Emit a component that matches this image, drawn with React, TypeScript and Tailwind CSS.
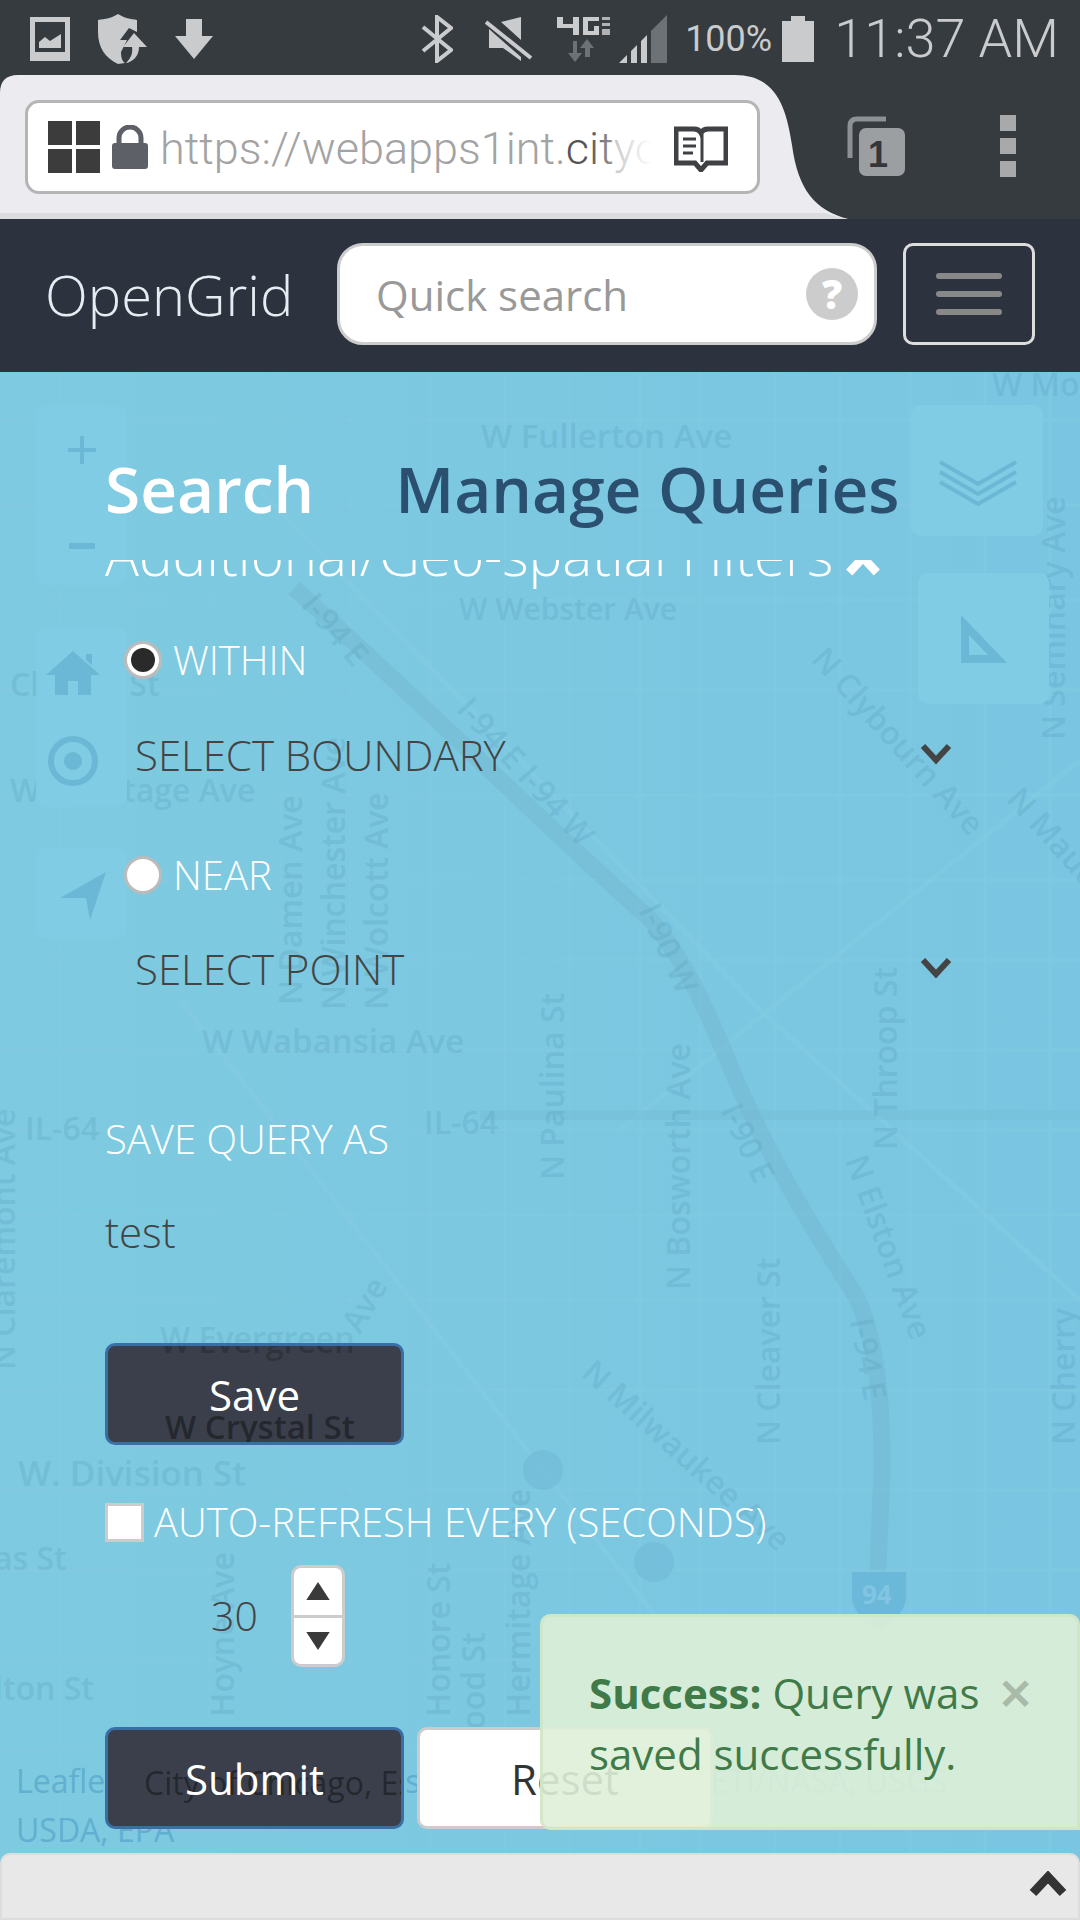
import React from 'react';

const sans = { fontFamily: '"Open Sans", sans-serif' };

// map labels, in page coordinates
const labels: { x: number; y: number; t: string; r?: number; s?: number }[] = [
  { x: 481, y: 448, t: 'W Fullerton Ave', s: 33 },
  { x: 459, y: 620, t: 'W Webster Ave', s: 30 },
  { x: 992, y: 396, t: 'W Mo' },
  { x: 10, y: 696, t: 'Clinton St' },
  { x: 10, y: 802, t: 'W Armitage Ave' },
  { x: 202, y: 1053, t: 'W Wabansia Ave', s: 33 },
  { x: 25, y: 1140, t: 'IL-64' },
  { x: 424, y: 1134, t: 'IL-64' },
  { x: 160, y: 1350, t: 'W Evergreen' },
  { x: 18, y: 1486, t: 'W. Division St', s: 35 },
  { x: -6, y: 1570, t: 'as St' },
  { x: -6, y: 1700, t: 'lton St' },
  { x: 302, y: 1005, t: 'N Damen Ave', r: -90 },
  { x: 345, y: 1010, t: 'N Winchester Ave', r: -90 },
  { x: 388, y: 1010, t: 'N Wolcott Ave', r: -90 },
  { x: 564, y: 1180, t: 'N Paulina St', r: -90 },
  { x: 690, y: 1290, t: 'N Bosworth Ave', r: -90 },
  { x: 897, y: 1150, t: 'N Throop St', r: -90 },
  { x: 780, y: 1445, t: 'N Cleaver St', r: -90 },
  { x: 1075, y: 1445, t: 'N Cherry', r: -90 },
  { x: 15, y: 1370, t: 'N Claremont Ave', r: -90 },
  { x: 234, y: 1750, t: 'N Hoyne Ave', r: -90 },
  { x: 450, y: 1750, t: 'N Honore St', r: -90 },
  { x: 485, y: 1760, t: 'Wood St', r: -90 },
  { x: 530, y: 1750, t: 'N Hermitage Ave', r: -90 },
  { x: 1065, y: 740, t: 'N Seminary Ave', r: -90 },
  { x: 810, y: 660, t: 'N Clybourn Ave', r: 48 },
  { x: 1005, y: 800, t: 'N Maud', r: 48 },
  { x: 845, y: 1160, t: 'N Elston Ave', r: 70 },
  { x: 580, y: 1375, t: 'N Milwaukee Ave', r: 42 },
  { x: 360, y: 1335, t: 'Ave', r: -60 },
  { x: 300, y: 605, t: 'I-94 E', r: 50 },
  { x: 455, y: 710, t: 'I-94 E  I-94 W', r: 48 },
  { x: 638, y: 910, t: 'I-90 W', r: 65 },
  { x: 720, y: 1110, t: 'I-90 E', r: 65 },
  { x: 850, y: 1320, t: 'I-94 E', r: 80 },
];

const vLines = [60, 130, 210, 280, 350, 430, 505, 570, 640, 700, 775, 840, 910, 985, 1050];
const hLines = [420, 505, 600, 690, 795, 880, 960, 1050, 1130, 1215, 1300, 1390, 1490, 1570, 1660, 1750];

function MapLayer() {
  return (
    <svg viewBox="0 372 1080 1548" className="absolute inset-0 w-full h-full" style={sans}>
      {vLines.map((x) => (
        <line key={x} x1={x} y1={372} x2={x} y2={1920} stroke="#88cde3" strokeWidth="3" opacity="0.3" />
      ))}
      {hLines.map((y) => (
        <line key={y} x1={0} y1={y} x2={1080} y2={y} stroke="#88cde3" strokeWidth="3" opacity="0.3" />
      ))}
      <path d="M250 480 L760 1010 L1080 1300" stroke="#88cde3" strokeWidth="5" fill="none" opacity="0.4" />
      <path d="M620 1130 L1080 760" stroke="#88cde3" strokeWidth="5" fill="none" opacity="0.35" />
      <path d="M180 1000 L720 1700" stroke="#88cde3" strokeWidth="5" fill="none" opacity="0.4" />
      <path d="M480 1115 H1080" stroke="#74b9d2" strokeWidth="10" fill="none" opacity="0.35" />
      <path
        d="M294 588 C420 700 560 840 649 918 C690 965 715 1030 735 1078 C775 1170 820 1240 857 1298 C880 1350 882 1420 882 1469 L878 1570"
        stroke="#74b5ce"
        strokeWidth="17"
        fill="none"
        opacity="0.45"
      />
      <circle cx="543" cy="1470" r="20" fill="#6cb4d4" opacity="0.45" />
      <circle cx="654" cy="1562" r="20" fill="#6cb4d4" opacity="0.45" />
      <path d="M852 1572 H906 V1600 Q900 1622 879 1630 Q858 1622 852 1600 Z" fill="#5fadd4" opacity="0.55" />
      <text x="862" y="1604" fontSize="26" fontWeight="700" fill="#8ccbe6" opacity="0.7">94</text>
      {labels.map((l) => (
        <text
          key={l.t + l.x}
          x={l.x}
          y={l.y}
          fontSize={l.s ?? 32}
          fontWeight="600"
          fill="#4c8fb0"
          opacity="0.2"
          transform={l.r ? `rotate(${l.r} ${l.x} ${l.y})` : undefined}
        >
          {l.t}
        </text>
      ))}
      <text x="16" y="1793" fontSize="32" fill="#4e9fc6" opacity="0.6">Leaflet | City of Chicago, Esri, HERE, Garmin, METI/NASA, USGS</text>
      <text x="16" y="1842" fontSize="32" fill="#4e9fc6" opacity="0.6">USDA, EPA</text>
    </svg>
  );
}

// leaflet controls seen through the form overlay
function MapControls() {
  return (
    <div className="absolute inset-0 pointer-events-none">
      <div className="absolute left-[36px] top-[33px] w-[91px] h-[180px] rounded-[10px] bg-[#80cce4] text-[#6bb8d6] flex flex-col items-center">
        <svg viewBox="0 0 32 32" className="w-[32px] h-[32px] mt-[29px]">
          <path d="M2 16H30M16 2V30" stroke="currentColor" strokeWidth="4" />
        </svg>
        <div className="w-[26px] h-[6px] bg-current mt-[77px]" />
      </div>
      <div className="absolute left-[36px] top-[255px] w-[91px] h-[180px] rounded-[10px] bg-[#80cce4] text-[#6bb8d6]">
        <svg viewBox="0 0 54 46" className="absolute left-[10px] top-[22px] w-[54px] h-[46px]">
          <path d="M27 2 L54 26 H45 V46 H32 V32 H22 V46 H9 V26 H0 Z M40 5 H46 V16 L40 11 Z" fill="currentColor" />
        </svg>
        <svg viewBox="0 0 52 52" className="absolute left-[11px] top-[108px] w-[52px] h-[52px]">
          <circle cx="26" cy="26" r="22" stroke="currentColor" strokeWidth="6" fill="none" />
          <circle cx="26" cy="26" r="9" fill="currentColor" />
        </svg>
      </div>
      <div className="absolute left-[36px] top-[476px] w-[91px] h-[91px] rounded-[10px] bg-[#80cce4] text-[#6bb8d6]">
        <svg viewBox="0 0 50 50" className="absolute left-[22px] top-[22px] w-[50px] h-[50px]">
          <path d="M48 2 L2 28 L28 28 L32 50 Z" fill="currentColor" />
        </svg>
      </div>
      <div className="absolute left-[911px] top-[33px] w-[132px] h-[131px] rounded-[10px] bg-[#80cce4] text-[#6bb8d6]">
        <svg viewBox="0 0 80 52" className="absolute left-[27px] top-[53px] w-[80px] h-[52px]" fill="none" stroke="currentColor" strokeWidth="4">
          <path d="M2 4 L40 26 L78 4" />
          <path d="M2 14 L40 36 L78 14" />
          <path d="M2 24 L40 46 L78 24" />
        </svg>
      </div>
      <div className="absolute left-[918px] top-[201px] w-[131px] h-[131px] rounded-[10px] bg-[#80cce4] text-[#6bb8d6]">
        <svg viewBox="0 0 46 48" className="absolute left-[43px] top-[42px] w-[46px] h-[48px]">
          <path fillRule="evenodd" d="M0 0 L46 48 H0 Z M8 20 V40 H27 Z" fill="currentColor" />
        </svg>
      </div>
    </div>
  );
}

function Chevron({ className }: { className: string }) {
  return (
    <svg viewBox="0 0 32 22" className={className} fill="none" stroke="currentColor" strokeWidth="6">
      <path d="M3 3 L16 17 L29 3" />
    </svg>
  );
}

function Radio({ checked, label }: { checked?: boolean; label: string }) {
  return (
    <div className="flex items-center h-[40px] ml-[124px] text-white text-[40px]">
      <span className="w-[38px] h-[38px] rounded-full bg-white border-[3px] border-[#bbbbbb] flex items-center justify-center">
        {checked && <span className="w-[24px] h-[24px] rounded-full bg-[#2a2a2a]" />}
      </span>
      <span className="ml-[11px] font-light">{label}</span>
    </div>
  );
}

function SelectRow({ label }: { label: string }) {
  return (
    <div className="flex items-center justify-between h-[50px] ml-[135px] w-[817px] text-[#444444] text-[42px]">
      <span className="font-light">{label}</span>
      <Chevron className="w-[32px] h-[22px] text-[#444444]" />
    </div>
  );
}

function StatusIcons() {
  return (
    <>
      <svg viewBox="0 0 40 44" className="w-[40px] h-[44px] ml-[30px] text-[#c9cbcd]">
        <path fillRule="evenodd" d="M0 0H40V44H0Z M5 5V35H35V5Z" fill="currentColor" />
        <path d="M9 31V25L15 20L20 24L31 17V31Z" fill="currentColor" />
      </svg>
      <svg viewBox="0 0 50 50" className="w-[50px] h-[50px] ml-[27px] text-[#c9cbcd]">
        <path d="M21 0 C27 4 34 5 40 6 V18 L32 14 L23 26 L30 26 L24 38 C24 43 25 47 28 49 L21 50 C8 44 1 33 1 18 V6 C8 5 15 4 21 0 Z" fill="currentColor" />
        <path d="M37 19 L50 33 H42 C42 42 36 48 29 49 C34 44 36 39 35 33 H26 Z" fill="currentColor" />
      </svg>
      <svg viewBox="0 0 38 40" className="w-[38px] h-[40px] ml-[28px] text-[#c9cbcd]">
        <path d="M11 0H27V17H38L19 40L0 17H11Z" fill="currentColor" />
      </svg>
      <div className="flex-1" />
      <svg viewBox="0 0 32 48" className="w-[32px] h-[48px] text-[#c9cbcd]" fill="none" stroke="currentColor" strokeWidth="4">
        <path d="M2 12 L30 35 L16 46 V2 L30 13 L2 36" />
      </svg>
      <svg viewBox="0 0 48 46" className="w-[48px] h-[46px] ml-[32px] text-[#c9cbcd]">
        <path d="M36 1 V24 L16 6 Z M4 13 L36 41 V45 L18 32 H4 Z" fill="currentColor" />
        <path d="M1 6 L46 42" stroke="currentColor" strokeWidth="4" />
      </svg>
      <svg viewBox="0 0 56 48" className="w-[56px] h-[48px] ml-[22px]">
        <path d="M2 2 V13 H18 V20 H24 V2 H18 V9 H8 V2 Z M28 2 H44 V6 H33 V16 H39 V11 H44 V20 H28 Z" fill="#c9cbcd" />
        <path d="M47 2 H55 V5 H47 Z M47 8 H55 V11 H47 Z M47 14 H55 V20 H47 Z" fill="#b0b3b6" />
        <path d="M18 26 V38 H13 L20 47 L27 38 H22 V26 Z" fill="#6d7276" />
        <path d="M30 46 V33 H25 L32 24 L39 33 H35 V42 H30 Z" fill="#6d7276" />
      </svg>
      <svg viewBox="0 0 48 48" className="w-[48px] h-[48px] ml-[8px]">
        <path d="M0 48 L8 40 V48 Z M12 36 L18 30 V48 H12 Z M22 26 L28 20 V48 H22 Z" fill="#c9cbcd" />
        <path d="M32 16 L48 0 V48 H32 Z" fill="#6d7276" />
      </svg>
      <span className="ml-[18px] text-[36px] text-[#c9cbcd]" style={{ fontFamily: 'Roboto, sans-serif' }}>
        100%
      </span>
      <div className="ml-[10px] w-[32px] h-[46px] flex flex-col items-center">
        <div className="w-[14px] h-[5px] bg-[#c9cbcd]" />
        <div className="w-full flex-1 bg-[#c9cbcd]" />
      </div>
      <span className="ml-[20px] mr-[21px] text-[54px] font-light text-[#c9cbcd]" style={{ fontFamily: 'Roboto, sans-serif' }}>
        11:37 AM
      </span>
    </>
  );
}

export default function App() {
  return (
    <div className="relative w-[1080px] h-[1920px] overflow-hidden bg-gradient-to-r from-[#7ecae0] to-[#7ac6e2] flex flex-col" style={sans}>
      <div className="h-[75px] flex items-center bg-[#363b40] pt-[2px]">
        <StatusIcons />
      </div>

      {/* browser toolbar */}
      <div className="relative h-[144px] bg-[#363b40] flex items-start">
        <svg viewBox="0 0 1080 144" className="absolute inset-0 w-full h-full">
          <path d="M0 144 V18 Q0 0 18 0 H735 C775 0 786 30 792 70 C798 115 815 135 848 144 Z" fill="#ebebf0" />
          <path d="M0 138 H826 Q838 143 848 144 H0 Z" fill="#dcdce0" />
        </svg>
        <div className="relative mt-[25px] ml-[25px] w-[735px] h-[94px] rounded-[14px] border-[3px] border-[#b5b5b5] bg-white flex items-center overflow-hidden">
          <div className="ml-[20px] w-[52px] h-[52px] grid grid-cols-2 gap-[4px] shrink-0">
            <span className="bg-[#3c3c3c]" />
            <span className="bg-[#3c3c3c]" />
            <span className="bg-[#3c3c3c]" />
            <span className="bg-[#3c3c3c]" />
          </div>
          <svg viewBox="0 0 36 44" className="w-[36px] h-[44px] ml-[12px] shrink-0">
            <path d="M7 20 V13 A11 11 0 0 1 29 13 V20" fill="none" stroke="#5d6066" strokeWidth="5" />
            <rect x="0" y="18" width="36" height="26" rx="3" fill="#5d6066" />
          </svg>
          <div className="relative ml-[12px] mt-[4px] w-[492px] overflow-hidden whitespace-nowrap text-[45px] font-light text-[#a3a3a3]" style={{ fontFamily: 'Roboto, sans-serif' }}>
            https://webapps1int.<span className="text-[#555555]">cit</span>yofchicago.org
            <div className="absolute right-0 top-0 bottom-0 w-[64px] bg-gradient-to-r from-transparent to-white" />
          </div>
          <svg viewBox="0 0 54 46" className="w-[54px] h-[46px] ml-[22px] mt-[4px] shrink-0" fill="none">
            <path d="M2 3 H20 Q25 3 27 7 Q29 3 34 3 H52 V37 H33 L27 44 L21 37 H2 Z" stroke="#3f4144" strokeWidth="5" />
            <path d="M28 8 V36" stroke="#3f4144" strokeWidth="3" />
            <path d="M9 13 H22 M9 20 H22 M9 27 H19" stroke="#3f4144" strokeWidth="3" />
          </svg>
        </div>
        <svg viewBox="0 0 60 60" className="relative w-[60px] h-[62px] ml-[85px] mt-[40px] shrink-0">
          <path d="M5 42 V10 Q5 3 12 3 H41" fill="none" stroke="#8e9194" strokeWidth="5" />
          <rect x="14" y="12" width="46" height="48" rx="7" fill="#9c9fa2" />
        </svg>
        <span className="absolute left-[868px] top-[53px] text-[36px] font-bold text-[#33373b]" style={{ fontFamily: '"Liberation Sans", sans-serif' }}>
          1
        </span>
        <div className="relative ml-[95px] mt-[40px] w-[16px] flex flex-col gap-[7px] shrink-0">
          <span className="h-[16px] bg-[#a7a9ab]" />
          <span className="h-[16px] bg-[#a7a9ab]" />
          <span className="h-[16px] bg-[#a7a9ab]" />
        </div>
      </div>

      {/* app header */}
      <header className="h-[153px] bg-[#2c333f] flex items-center pb-[3px]">
        <span className="ml-[45px] w-[292px] text-[56px] font-light text-[#e6ecf2]">OpenGrid</span>
        <div className="w-[540px] h-[102px] rounded-[26px] border-[3px] border-[#cccccc] bg-white flex items-center justify-between pl-[36px] pr-[16px]">
          <span className="text-[42px] text-[#999999]">Quick search</span>
          <span className="w-[52px] h-[52px] rounded-full bg-[#cccccc] text-white text-[40px] font-extrabold flex items-center justify-center">?</span>
        </div>
        <div className="ml-[26px] w-[132px] h-[102px] rounded-[10px] border-[3px] border-[#dddddd] flex flex-col items-center justify-center gap-[12px]">
          <span className="w-[66px] h-[6px] rounded-full bg-[#888888]" />
          <span className="w-[66px] h-[6px] rounded-full bg-[#888888]" />
          <span className="w-[66px] h-[6px] rounded-full bg-[#888888]" />
        </div>
      </header>

      <main className="relative flex-1">
        <MapLayer />
        <MapControls />

        {/* tabs */}
        <div className="relative h-[188px] pl-[105px] pt-[82px] flex text-[64px] font-semibold leading-[70px]">
          <span className="text-white">Search</span>
          <span className="ml-[81px] text-[#2b506f]">Manage Queries</span>
        </div>

        {/* scrolled panel, the heading is cut by the tab row */}
        <div className="relative h-[40px] overflow-hidden pl-[105px]">
          <div className="-mt-[33px] text-[56.5px] leading-[56px] font-light text-white whitespace-nowrap">
            Additional/Geo-spatial Filters
            <svg viewBox="0 0 32 22" className="inline-block align-baseline w-[34px] h-[24px] ml-[13px]" fill="none" stroke="currentColor" strokeWidth="8">
              <path d="M3 19 L16 5 L29 19" />
            </svg>
          </div>
        </div>

        <div className="relative">
          <div className="mt-[40px]"><Radio checked label="WITHIN" /></div>
          <div className="mt-[49px]"><SelectRow label="SELECT BOUNDARY" /></div>
          <div className="mt-[76px]"><Radio label="NEAR" /></div>
          <div className="mt-[48px]"><SelectRow label="SELECT POINT" /></div>
        </div>

        <div className="relative pl-[105px]">
          <div className="mt-[121px] h-[50px] flex items-center text-[40px] font-light text-white">SAVE QUERY AS</div>
          <div className="mt-[42px] h-[50px] flex items-center text-[42px] font-light text-[#444444]">test</div>

          <button className="relative mt-[87px] block w-[299px] h-[102px] rounded-[10px] border-[3px] border-[#3a6ea5] bg-[#3a3f4b] text-[42px] font-normal text-white overflow-hidden">
            <span className="absolute left-[52px] -top-[29px] text-[32px] font-semibold text-black/20 whitespace-nowrap">W Evergreen</span>
            <span className="absolute left-[57px] top-[56px] text-[33px] font-semibold text-black/40 whitespace-nowrap">W Crystal St</span>
            <span className="relative">Save</span>
          </button>

          <div className="mt-[57px] h-[40px] flex items-center">
            <span className="w-[39px] h-[39px] bg-white border-[3px] border-[#cccccc]" />
            <span className="ml-[10px] text-[40px] font-light text-white whitespace-nowrap">AUTO-REFRESH EVERY (SECONDS)</span>
          </div>

          <div className="mt-[23px] flex items-center h-[102px]">
            <span className="ml-[106px] w-[80px] text-[41px] font-light text-[#444444]">30</span>
            <div className="w-[54px] h-[102px] rounded-[10px] border-[3px] border-[#cccccc] bg-white flex flex-col">
              <div className="flex-1 flex items-center justify-center border-b-[3px] border-[#cccccc]">
                <svg viewBox="0 0 26 20" className="w-[26px] h-[18px]"><path d="M13 0 L26 20 H0 Z" fill="#3a3a3a" /></svg>
              </div>
              <div className="flex-1 flex items-center justify-center">
                <svg viewBox="0 0 26 20" className="w-[26px] h-[18px]"><path d="M0 0 H26 L13 20 Z" fill="#3a3a3a" /></svg>
              </div>
            </div>
          </div>

          <div className="mt-[60px] flex gap-[13px]">
            <button className="relative w-[299px] h-[102px] rounded-[10px] border-[3px] border-[#3a6ea5] bg-[#3a3f4b] text-[42px] text-white overflow-hidden">
              <span className="absolute left-[36px] top-[29px] text-[32px] text-black/40 whitespace-nowrap">City of Chicago, Esri,</span>
              <span className="relative">Submit</span>
            </button>
            <button className="w-[296px] h-[102px] rounded-[10px] border-[3px] border-[#cccccc] bg-white text-[42px] text-[#333333]">Reset</button>
          </div>
        </div>

        {/* success toast */}
        <div className="absolute left-[540px] top-[1242px] w-[540px] h-[216px] rounded-l-[10px] rounded-tr-[10px] border-[3px] border-[#cfe5c4]/80 bg-[#dff0d8]/90 pl-[46px] pr-[20px] pt-[45px] text-[42px] leading-[61px] text-[#3f7a48]">
          <div className="flex justify-between whitespace-nowrap">
            <span><b className="font-bold">Success:</b> Query was</span>
            <span className="mr-[24px] text-[#a9baa9] font-bold">✕</span>
          </div>
          <div className="whitespace-nowrap">saved successfully.</div>
        </div>

        {/* collapsed bottom panel */}
        <div className="absolute left-0 right-0 bottom-0 h-[67px] rounded-t-[10px] border-2 border-[#dddddd] bg-[#e8e8e8] flex items-start justify-end pt-[16px] pr-[11px]">
          <svg viewBox="0 0 38 26" className="w-[38px] h-[26px] text-[#333333]" fill="none" stroke="currentColor" strokeWidth="9">
            <path d="M4 22 L19 6 L34 22" />
          </svg>
        </div>
      </main>
    </div>
  );
}
